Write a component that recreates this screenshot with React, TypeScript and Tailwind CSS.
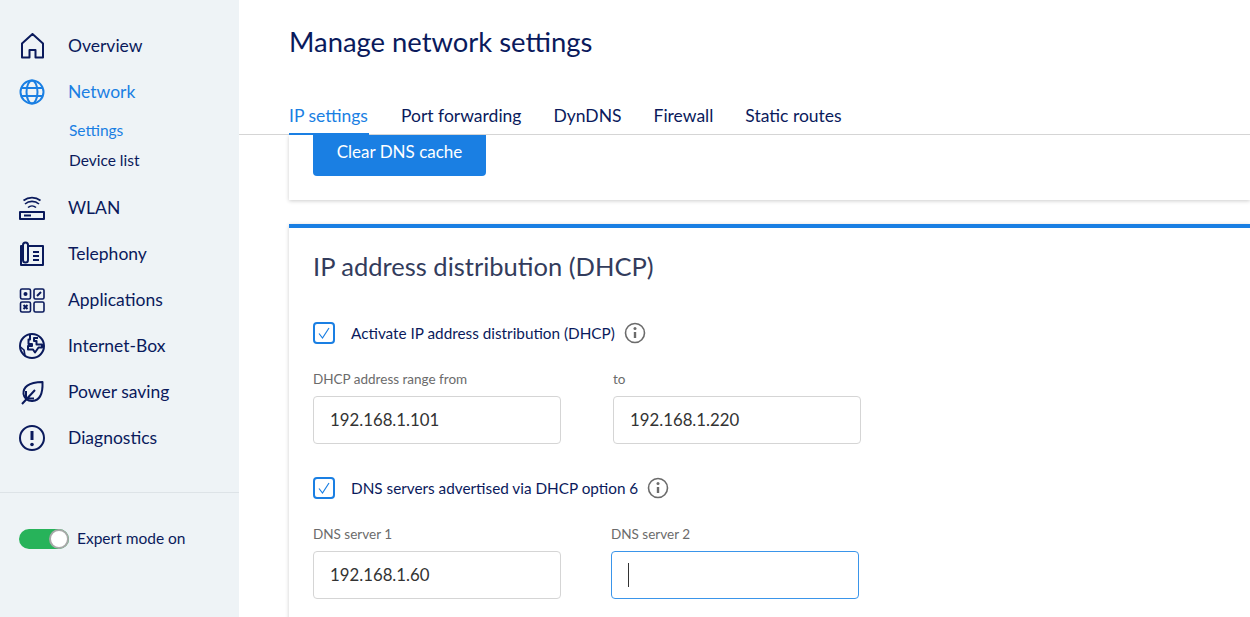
import type { ReactNode } from 'react'

const font = { fontFamily: 'Lato, sans-serif' }

function Icon({ children, className = 'text-[#0a1a5c]' }: { children: ReactNode; className?: string }) {
  return (
    <svg
      className={`h-[26px] w-[26px] shrink-0 ${className}`}
      viewBox="0 0 26 26"
      fill="none"
      stroke="currentColor"
      strokeWidth="2"
      strokeLinejoin="round"
    >
      {children}
    </svg>
  )
}

const HomeIcon = (
  <Icon>
    <path d="M3 10.500 13.500 1 24 10.500V24.500h-7.500V17h-6v7.500H3z" />
  </Icon>
)

const GlobeIcon = (
  <Icon className="text-[#1a7fe3]">
    <circle cx="13" cy="13" r="11.500" />
    <ellipse cx="13" cy="13" rx="5.500" ry="11.500" />
    <path d="M2.500 9h21M2.500 17h21" />
  </Icon>
)

const WlanIcon = (
  <Icon>
    <rect x="1" y="17" width="24" height="7" />
    <path d="M5 20.500h7" />
    <path d="M9 12.500a6 6 0 0 1 8 0M6 9a10.500 10.500 0 0 1 14 0M4.500 5.500a14 14 0 0 1 17 0" strokeWidth="1.600" />
  </Icon>
)

const PhoneIcon = (
  <Icon>
    <path d="M9 5h15v19H2V5h2" />
    <path d="M4 4a2.500 2.500 0 0 1 5 0v15a2.500 2.500 0 0 1-5 0z" />
    <path d="M14 11h6M14 15h6M14 19h6" />
  </Icon>
)

const AppsIcon = (
  <Icon>
    <g strokeWidth="1.600">
      <rect x="1.500" y="2" width="10" height="10" rx="1.500" />
      <rect x="15" y="2" width="10" height="10" rx="1.500" />
      <rect x="1.500" y="15" width="10" height="10" rx="1.500" />
      <rect x="15" y="15" width="10" height="10" rx="1.500" />
      <path d="m18 9 4-4" strokeWidth="2" />
      <path d="m4.500 18 4 4m0-4-4 4" strokeWidth="2" />
    </g>
    <circle cx="6.500" cy="7" r="2" fill="currentColor" stroke="none" />
  </Icon>
)

const BoxIcon = (
  <Icon>
    <circle cx="13" cy="13" r="12" />
    <path d="M11 2v4.500H9.500V11h3.500v2H9v3.500h5l2 3 3.500-5H23v-3h-5.500V8H15V5h4" />
    <path d="M1.500 14 5 17l1 6" strokeWidth="1.600" />
  </Icon>
)

const LeafIcon = (
  <Icon>
    <path d="M4.500 15C4 8 9 3.500 23.500 3c.5 13-3 18.500-10 19-5 .3-8.500-3-9-7z" />
    <path d="M3 25 16 11M7 12v7.500h8" />
  </Icon>
)

const AlertIcon = (
  <Icon>
    <circle cx="13" cy="13" r="12" />
    <path d="M13 6v9" strokeWidth="3" />
    <circle cx="13" cy="19.500" r="1.800" fill="currentColor" stroke="none" />
  </Icon>
)

const navBottom = [
  { label: 'WLAN', icon: WlanIcon },
  { label: 'Telephony', icon: PhoneIcon },
  { label: 'Applications', icon: AppsIcon },
  { label: 'Internet-Box', icon: BoxIcon },
  { label: 'Power saving', icon: LeafIcon },
  { label: 'Diagnostics', icon: AlertIcon },
]

const tabs = ['IP settings', 'Port forwarding', 'DynDNS', 'Firewall', 'Static routes']

function NavItem({ label, icon, active }: { label: string; icon: ReactNode; active?: boolean }) {
  return (
    <div className="flex h-[46px] items-center gap-[23px] pl-[19px]">
      {icon}
      <span className={`text-[17.5px] ${active ? 'text-[#1a7fe3]' : 'text-[#0a1a5c]'}`}>{label}</span>
    </div>
  )
}

function InfoIcon() {
  return (
    <svg className="h-[22px] w-[22px] text-[#6b6b6b]" viewBox="0 0 22 22" fill="none" stroke="currentColor" strokeWidth="1.600">
      <circle cx="11" cy="11" r="9.500" />
      <path d="M11 10v6" strokeWidth="2.400" />
      <circle cx="11" cy="6.500" r="1.500" fill="currentColor" stroke="none" />
    </svg>
  )
}

function CheckRow({ label, className = '' }: { label: string; className?: string }) {
  return (
    <div className={`flex items-center ${className}`}>
      <div className="flex h-[22px] w-[22px] items-center justify-center rounded-[4px] border-2 border-[#1a7fe3] bg-white">
        <svg className="h-[14px] w-[14px] text-[#1a7fe3]" viewBox="0 0 14 14" fill="none" stroke="currentColor" strokeWidth="1.200">
          <path d="m2 7.500 3.500 4.500 6.500-10" />
        </svg>
      </div>
      <span className="ml-4 mr-[9px] text-[15.3px] text-[#0a1a5c]">{label}</span>
      <InfoIcon />
    </div>
  )
}

function Field({ label, value, focused }: { label: string; value?: string; focused?: boolean }) {
  return (
    <div className="w-[248px]">
      <div className="mb-[7px] h-[20px] text-[13.5px] leading-[20px] text-[#6b6b6b]">{label}</div>
      <div
        className={`flex h-[48px] items-center rounded-[4px] border bg-white pl-4 text-[16.8px] text-[#333333] ${
          focused ? 'border-[#3a95ea]' : 'border-[#d5d5d5]'
        }`}
      >
        {value}
        {focused && <div className="h-[24px] w-px bg-[#333333]" />}
      </div>
    </div>
  )
}

export default function App() {
  return (
    <div className="flex h-[617px] w-[1250px] overflow-hidden bg-white" style={font}>
      {/* Sidebar */}
      <aside className="w-[239px] shrink-0 bg-[#eef3f6] pt-[23px]">
        <NavItem label="Overview" icon={HomeIcon} />
        <NavItem label="Network" icon={GlobeIcon} active />
        <div className="flex flex-col pl-[69px] text-[15.5px] leading-[30px]">
          <span className="text-[#1a7fe3]">Settings</span>
          <span className="text-[#0a1a5c]">Device list</span>
        </div>
        <div className="pt-[10px]">
          {navBottom.map((item) => (
            <NavItem key={item.label} {...item} />
          ))}
        </div>
        <div className="mt-[31px] border-t border-[#dde3e7] pl-[19px] pt-[34px]">
          <div className="flex items-center">
            <div className="flex h-[20px] w-[50px] items-center justify-end rounded-full bg-[#27b35a]">
              <div className="h-[20px] w-[20px] rounded-full border-2 border-[#a8a8a8] bg-white" />
            </div>
            <span className="ml-2 text-[15.5px] text-[#0a1a5c]">Expert mode on</span>
          </div>
        </div>
      </aside>

      {/* Main */}
      <main className="flex min-w-0 flex-1 flex-col">
        <header className="h-[135px] shrink-0 border-b border-[#d5d5d5] pl-[50px]">
          <h1 className="pt-[22px] text-[27.4px] leading-[40px] text-[#0a1a5c]">Manage network settings</h1>
          <nav className="mt-[31px] flex gap-[32px]">
            {tabs.map((tab, i) => (
              <div
                key={tab}
                className={`h-[42px] text-[17.5px] leading-[46px] ${
                  i === 0 ? 'w-[80px] border-b-2 border-[#1a7fe3] text-[#1a7fe3]' : 'text-[#0a1a5c]'
                }`}
              >
                {tab}
              </div>
            ))}
          </nav>
        </header>

        <div className="flex-1 overflow-hidden pl-[50px]">
          <section className="h-[65px] bg-white pl-6 shadow-[0_1px_4px_rgba(0,0,0,0.2)]">
            <button className="h-[41px] w-[173px] rounded-b-[4px] bg-[#1a7fe3] pb-2 text-[17px] text-white">Clear DNS cache</button>
          </section>

          <section className="mt-[24px] h-[420px] border-t-4 border-[#1a7fe3] bg-white pl-6 shadow-[0_1px_4px_rgba(0,0,0,0.2)]">
            <h2 className="pt-[18px] text-[25.5px] leading-[40px] text-[#333c5c]">IP address distribution (DHCP)</h2>
            <CheckRow label="Activate IP address distribution (DHCP)" className="mt-[36px]" />
            <div className="mt-[24px] flex gap-[52px]">
              <Field label="DHCP address range from" value="192.168.1.101" />
              <Field label="to" value="192.168.1.220" />
            </div>
            <CheckRow label="DNS servers advertised via DHCP option 6" className="mt-[33px]" />
            <div className="mt-[24px] flex gap-[50px]">
              <Field label="DNS server 1" value="192.168.1.60" />
              <Field label="DNS server 2" focused />
            </div>
          </section>
        </div>
      </main>
    </div>
  )
}
